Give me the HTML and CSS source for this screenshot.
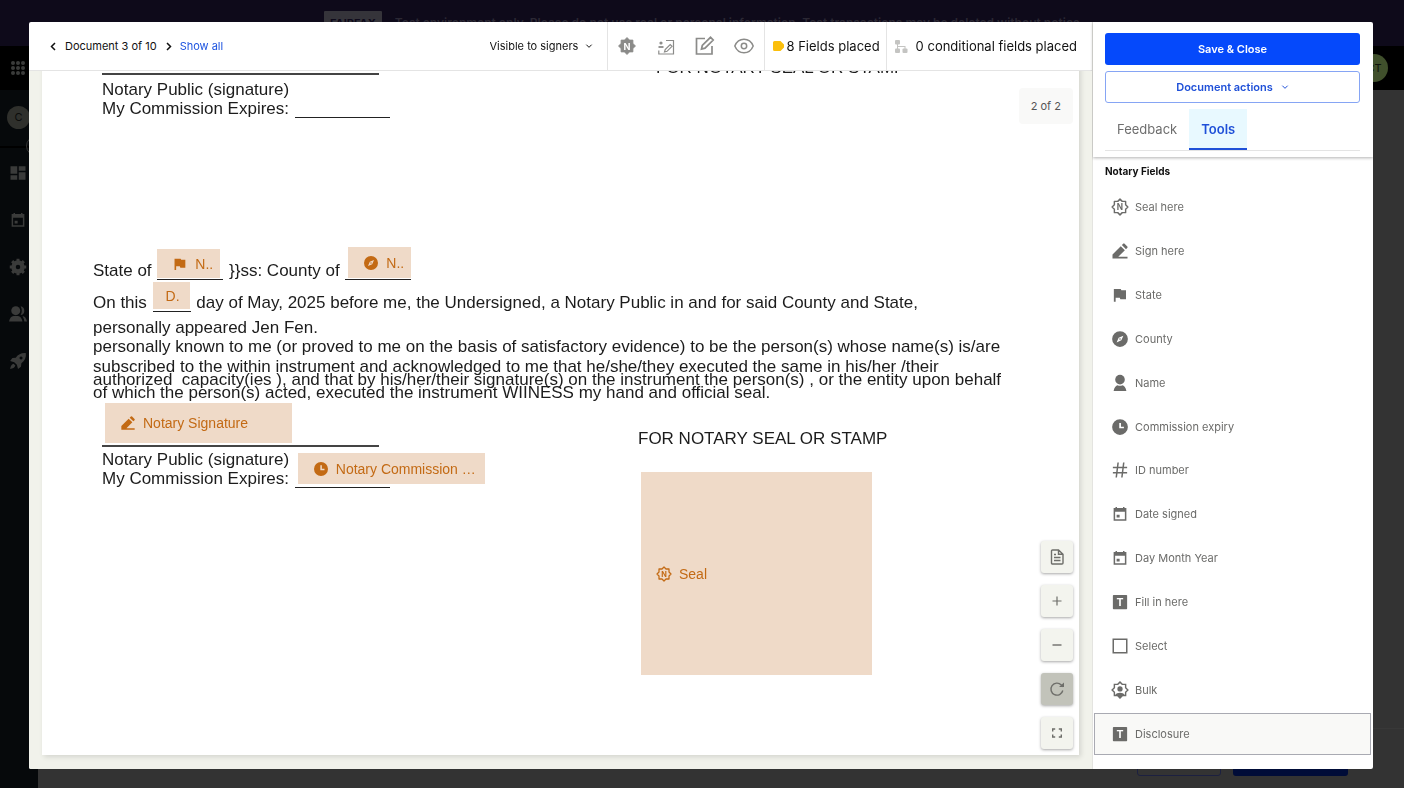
FILE: index.html
```html
<!DOCTYPE html>
<html lang="en">
<head>
<meta charset="utf-8">
<meta name="viewport" content="width=device-width, initial-scale=1">
<title>Document preparation</title>
<link rel="stylesheet" href="styles.css">
</head>
<body>
<svg class="sprite" aria-hidden="true">
  <symbol id="i-seal" viewBox="0 0 24 24"><path d="M12 1.500l3 3h4.500v4.500l3 3-3 3v4.500H15l-3 3-3-3H4.500V15l-3-3 3-3V4.500H9z" fill="none" stroke="currentColor" stroke-width="1.900" stroke-linejoin="round"/><text x="12" y="16" text-anchor="middle" class="glyph" fill="currentColor">N</text></symbol>
  <symbol id="i-seal-solid" viewBox="0 0 24 24"><path d="M12 1.800l3 3.100h4.100v4.100l3.100 3-3.100 3v4.100H15l-3 3.100-3-3.100H4.900V15l-3.100-3 3.100-3V4.900H9z" fill="currentColor" stroke="currentColor" stroke-linejoin="round"/><text x="12" y="16.300" text-anchor="middle" class="glyph" fill="#fff">N</text></symbol>
  <symbol id="i-pen" viewBox="0 0 24 24"><path d="M2 22v-5.500L13 5.500l5.500 5.500-8.800 8.800H22V22zM14.500 4l1.800-1.800a1.300 1.300 0 0 1 1.800 0l3.700 3.700a1.300 1.300 0 0 1 0 1.800L20 9.500z" fill="currentColor"/></symbol>
  <symbol id="i-flag" viewBox="0 0 24 24"><path d="M3.800 4H13l.8 1.500H20V17.500h-7.500l-.8-2H6.200V21H3.800z" fill="currentColor"/></symbol>
  <symbol id="i-compass" viewBox="0 0 24 24"><path fill-rule="evenodd" d="M12 1.500a10.500 10.500 0 1 1 0 21 10.500 10.500 0 0 1 0-21zM16.500 7.500l-6.300 2.700-2.700 6.300 6.300-2.700z" fill="currentColor"/><circle cx="12" cy="12" r="1" fill="currentColor"/></symbol>
  <symbol id="i-person" viewBox="0 0 24 24"><circle cx="12" cy="7.500" r="6.400" fill="currentColor"/><path d="M3.500 22.800c.5-4.800 3.200-7.300 5.300-7.800 2.100 1 4.300 1 6.400 0 2.100.5 4.800 3 5.300 7.800z" fill="currentColor"/></symbol>
  <symbol id="i-clock" viewBox="0 0 24 24"><path fill-rule="evenodd" d="M12 1.500a10.500 10.500 0 1 1 0 21 10.500 10.500 0 0 1 0-21zM11 6.500v7.300h6.200v-2.300h-3.900V6.500z" fill="currentColor"/></symbol>
  <symbol id="i-hash" viewBox="0 0 24 24"><path d="M9.500 2L7 22M17 2l-2.500 20M2.500 8.500h19M2.500 15.500h19" fill="none" stroke="currentColor" stroke-width="2"/></symbol>
  <symbol id="i-cal" viewBox="0 0 24 24"><path fill-rule="evenodd" d="M3.500 4H6V2.500h2V4h8V2.500h2V4h2.500v17h-17zM5.500 9v10h13V9zM7.500 13h4v3.500h-4z" fill="currentColor"/></symbol>
  <symbol id="i-text" viewBox="0 0 24 24"><rect x="2.500" y="2.500" width="19" height="19" rx="1" fill="currentColor"/><text x="12" y="17" text-anchor="middle" class="glyph glyph-lg" fill="#fff">T</text></symbol>
  <symbol id="i-box" viewBox="0 0 24 24"><rect x="3" y="3" width="18" height="18" fill="none" stroke="currentColor" stroke-width="2"/></symbol>
  <symbol id="i-bulk" viewBox="0 0 24 24"><path d="M12 1.500l3 3h4.500v4.500l3 3-3 3v4.500H15l-3 3-3-3H4.500V15l-3-3 3-3V4.500H9z" fill="none" stroke="currentColor" stroke-width="1.900"/><circle cx="12" cy="10.500" r="3.500" fill="currentColor"/><path d="M5.500 18.500c2.500-4 10.500-4 13 0l-3.500 1.300-3 3.200-3-3.200z" fill="currentColor"/></symbol>
  <symbol id="i-down" viewBox="0 0 24 24"><path d="M4 8l8 8 8-8" fill="none" stroke="currentColor" stroke-width="3"/></symbol>
</svg>

<div class="app" aria-hidden="true">
  <div class="banner"><span class="tag">FAIRFAX</span><span>Test environment only. Please do not use real or personal information. Test transactions may be deleted without notice</span></div>
  <div class="topbar">
    <svg width="16" height="16" viewBox="0 0 16 16" fill="currentColor"><circle cx="3" cy="3" r="2"/><circle cx="8" cy="3" r="2"/><circle cx="13" cy="3" r="2"/><circle cx="3" cy="8" r="2"/><circle cx="8" cy="8" r="2"/><circle cx="13" cy="8" r="2"/><circle cx="3" cy="13" r="2"/><circle cx="8" cy="13" r="2"/><circle cx="13" cy="13" r="2"/></svg>
    <span class="user">CT</span>
  </div>
  <div class="body">
    <nav class="rail">
      <div class="org"><span class="org-mark">C</span><span class="collapse"></span></div>
      <svg width="18" height="18" viewBox="0 0 24 24" fill="currentColor"><path d="M2 3h9v10H2zM13 3h9v6h-9zM13 11h9v10h-9zM2 15h9v6H2z"/></svg>
      <svg width="18" height="18"><use href="#i-cal"/></svg>
      <svg width="18" height="18" viewBox="0 0 24 24"><circle cx="12" cy="12" r="6" fill="none" stroke="currentColor" stroke-width="6"/><path d="M12 1v4M12 19v4M1 12h4M19 12h4M4.200 4.200l3 3M16.800 16.800l3 3M4.200 19.800l3-3M16.800 7.200l3-3" stroke="currentColor" stroke-width="4"/></svg>
      <svg width="18" height="18" viewBox="0 0 24 24" fill="currentColor"><circle cx="9" cy="7.500" r="6"/><path d="M0 22c1-5 3-7 6-7.500h6c3 .5 5 2.500 6 7.500zM15.500 1.600a6 6 0 0 1 0 11.800q3-5.500 0-11.800zM18 14.500c3 .5 5 2.500 6 7.500h-3.500q-.5-4-2.500-7.500z"/></svg>
      <svg width="18" height="18" viewBox="0 0 24 24"><path fill-rule="evenodd" d="M22.500 1.500c.5 6-1.500 10-6 13.500l-.5 4.500-4 3-1.500-5.500-3.500-3.500L1.500 12l3-4 4.500-.5C12.500 3 16.500 1 22.500 1.500zM16 6a2 2 0 1 0 .1 0zM6 15.500l2.500 2.500c-1 3-3.500 4-7 4.500.5-3.500 1.500-6 4.500-7z" fill="currentColor"/></svg>
    </nav>
    <div class="foot"><span class="ghost-btn"></span><span class="ghost-btn ghost-main"></span></div>
  </div>
</div>

<div class="modal" role="dialog" aria-label="Document editor">
  <main class="editor">
    <header class="toolbar">
      <div class="pager">
        <button class="plain" aria-label="Previous document"><svg width="9" height="9" viewBox="0 0 9 9"><path d="M6 1L2.500 4.500 6 8" fill="none" stroke="currentColor" stroke-width="1.500"/></svg></button>
        <span class="count">Document 3 of 10</span>
        <button class="plain" aria-label="Next document"><svg width="9" height="9" viewBox="0 0 9 9"><path d="M3 1l3.500 3.500L3 8" fill="none" stroke="currentColor" stroke-width="1.500"/></svg></button>
        <a class="show" href="#all">Show all</a>
      </div>
      <label class="visible"><select aria-label="Visibility"><option>Visible to signers</option></select><svg width="8" height="8"><use href="#i-down"/></svg></label>
      <div class="icons">
        <button class="plain" aria-label="Notary"><svg width="20" height="20"><use href="#i-seal-solid"/></svg></button>
        <button class="plain" aria-label="Signer fields"><svg width="20" height="20" viewBox="0 0 20 20" fill="none" stroke="currentColor" stroke-width="1.200"><path d="M10 4.500h7.500v13.500H2.800V14.500M8.500 16l.7-2.500L14.200 8.500l1.800 1.800-5 5z"/><circle cx="5" cy="7" r="1" fill="currentColor"/><path d="M2.500 11h5" stroke-width="1.800"/></svg></button>
        <button class="plain" aria-label="Edit"><svg width="20" height="20" viewBox="0 0 20 20" fill="none" stroke="currentColor" stroke-width="1.700"><path d="M10 2.500H1.500v15.500h15.500V10M6.500 13l.8-3.500L15.500 1.300l2.700 2.700L10 12.200z"/></svg></button>
        <button class="plain" aria-label="Preview"><svg width="20" height="20" viewBox="0 0 20 20" fill="none" stroke="currentColor" stroke-width="1.500"><path d="M.8 10C4.500 1 15.500 1 19.200 10 15.500 19 4.500 19 .8 10z"/><circle cx="10" cy="10" r="2.700"/></svg></button>
      </div>
      <div class="placed"><svg width="11" height="10" viewBox="0 0 11 10"><path d="M1.500 0H7.500L11 3.500v3L7.500 10h-6A1.500 1.500 0 0 1 0 8.500v-7A1.500 1.500 0 0 1 1.500 0z" fill="#fbbf0c"/></svg><span>8 Fields placed</span></div>
      <div class="placed conditional"><svg width="13" height="13" viewBox="0 0 13 13" fill="#c4c4c2"><rect width="5" height="4.500" rx="1"/><rect y="8.500" width="5" height="4.500" rx="1"/><rect x="7.500" y="8.500" width="5" height="4.500" rx="1"/><path d="M2 4h1v5H2zM2.500 6h8v3h-1V7h-7z"/></svg><span>0 conditional fields placed</span></div>
    </header>

    <section class="viewer">
      <article class="page">
        <div class="sign-row sign-row-prev">
          <div class="signer">
            <div class="rule"></div>
            <p>Notary Public (signature)</p>
            <p>My Commission Expires: <span class="blank w-expiry"></span></p>
          </div>
          <p>FOR NOTARY SEAL OR STAMP</p>
        </div>

        <div class="act">
          <p>State of <span class="blank w-place"><button class="field f-state"><svg><use href="#i-flag"/></svg>N..</button></span> }}ss: County of <span class="blank w-place"><button class="field f-county"><svg><use href="#i-compass"/></svg>N..</button></span></p>
          <p class="day">On this <span class="blank w-day"><button class="field f-day">D.</button></span> day of May, 2025 before me, the Undersigned, a Notary Public in and for said County and State,</p>
          <p>personally appeared Jen Fen.</p>
          <p>personally known to me (or proved to me on the basis of satisfactory evidence) to be the person(s) whose name(s) is/are</p>
          <p class="tight">subscribed to the within instrument and acknowledged to me that he/she/they executed the same in his/her /their<br>authorized&nbsp; capacity(ies ), and that by his/her/their signature(s) on the instrument the person(s) , or the entity upon behalf<br>of which the person(s) acted, executed the instrument WIINESS my hand and official seal.</p>
        </div>

        <div class="sign-row sign-row-cur">
          <div class="signer">
            <div class="rule"><button class="field f-sign"><svg><use href="#i-pen"/></svg>Notary Signature</button></div>
            <p>Notary Public (signature)</p>
            <p>My Commission Expires: <span class="blank w-expiry"><button class="field f-expiry"><svg><use href="#i-clock"/></svg>Notary Commission …</button></span></p>
          </div>
          <div class="stamp">
            <p>FOR NOTARY SEAL OR STAMP</p>
            <button class="field f-seal"><svg><use href="#i-seal"/></svg>Seal</button>
          </div>
        </div>
      </article>

      <span class="page-no">2 of 2</span>
      <div class="zoom">
        <button aria-label="Pages"><svg width="16" height="16" viewBox="0 0 16 16" fill="none" stroke="currentColor" stroke-width="1.400"><path d="M3.500 1h6L14 5.200V14a1 1 0 0 1-1 1H3.500a1 1 0 0 1-1-1V2a1 1 0 0 1 1-1zM9.500 1v4.200H14M5 8.500h6.500M5 11.500h6.500M5 5.500h2"/></svg></button>
        <button aria-label="Zoom in"><svg width="16" height="16" viewBox="0 0 16 16" stroke="currentColor" stroke-width="1.200"><path d="M8 3.500v9M3.500 8h9"/></svg></button>
        <button aria-label="Zoom out"><svg width="16" height="16" viewBox="0 0 16 16" stroke="currentColor" stroke-width="1.400"><path d="M3.500 8h9"/></svg></button>
        <button class="on" aria-label="Rotate"><svg width="16" height="16" viewBox="0 0 16 16" fill="none" stroke="currentColor" stroke-width="1.400"><path d="M13.800 9.500A6 6 0 1 1 12.300 4l1.700 1.800"/><path d="M10 6h5V1.500z" fill="currentColor" stroke="none"/></svg></button>
        <button aria-label="Full screen"><svg width="16" height="16" viewBox="0 0 16 16" fill="none" stroke="currentColor" stroke-width="1.400"><path d="M3.700 6.500V4h2.500M9.800 4h2.500v2.500M12.300 9.500V12H9.800M6.200 12H3.700V9.500"/></svg></button>
      </div>
    </section>
  </main>

  <aside class="panel">
    <div class="panel-head">
      <button class="btn btn-main">Save &amp; Close</button>
      <button class="btn btn-line">Document actions <svg width="8" height="8"><use href="#i-down"/></svg></button>
      <div class="tabs" role="tablist">
        <button role="tab" aria-selected="false">Feedback</button>
        <button role="tab" aria-selected="true" class="tab-on">Tools</button>
      </div>
    </div>
    <h2>Notary Fields</h2>
    <ul class="tools">
      <li><button><svg><use href="#i-seal"/></svg>Seal here</button></li>
      <li><button><svg><use href="#i-pen"/></svg>Sign here</button></li>
      <li><button><svg><use href="#i-flag"/></svg>State</button></li>
      <li><button><svg><use href="#i-compass"/></svg>County</button></li>
      <li><button><svg><use href="#i-person"/></svg>Name</button></li>
      <li><button><svg><use href="#i-clock"/></svg>Commission expiry</button></li>
      <li><button><svg><use href="#i-hash"/></svg>ID number</button></li>
      <li><button><svg><use href="#i-cal"/></svg>Date signed</button></li>
      <li><button><svg><use href="#i-cal"/></svg>Day Month Year</button></li>
      <li><button><svg><use href="#i-text"/></svg>Fill in here</button></li>
      <li><button><svg><use href="#i-box"/></svg>Select</button></li>
      <li><button><svg><use href="#i-bulk"/></svg>Bulk</button></li>
      <li><button class="current"><svg><use href="#i-text"/></svg>Disclosure</button></li>
    </ul>
  </aside>
</div>
</body>
</html>
```
FILE: styles.css
```css
* { box-sizing: border-box; }
body { margin: 0; font: 11px/16px Inter, sans-serif; color: #111; }
p, h2, ul { margin: 0; padding: 0; }
button, select { font: inherit; color: inherit; background: none; border: 0; padding: 0; margin: 0; cursor: pointer; }
svg { display: block; flex: none; }
.sprite { display: none; }
.glyph { font: 700 11px Inter, sans-serif; }
.glyph-lg { font-size: 14px; }

/* dimmed application behind the dialog */
.app { display: flex; flex-direction: column; height: 100vh; background: #333; color: #3a3b3a; overflow: hidden; }
.banner { flex: none; height: 46px; display: flex; justify-content: center; align-items: flex-start; gap: 13px; padding: 11px 0; background: #0e0a1a; color: #2b2834; font-size: 12px; line-height: 24px; font-weight: 600; }
.tag { background: #35343a; color: #0e0a1a; padding: 0 6px; font-size: 11px; font-weight: 700; border-radius: 1px; }
.topbar { flex: none; height: 44px; display: flex; align-items: center; justify-content: space-between; padding: 0 16px 0 10px; background: #000; }
.user { width: 28px; height: 28px; border-radius: 50%; background: #40502c; color: #0d120a; text-align: center; line-height: 28px; }
.body { flex: 1; display: flex; min-height: 0; }
.rail { flex: none; width: 38px; display: flex; flex-direction: column; gap: 29px; padding-left: 9px; background: #06090b; }
.org { height: 58px; margin: 0 0 -13px -9px; padding: 16px 0 0 7px; border-bottom: 2px solid #000; position: relative; }
.org-mark { display: block; width: 23px; height: 23px; border-radius: 50%; background: #2f302c; color: #0b0c0b; text-align: center; line-height: 23px; }
.collapse { position: absolute; right: -8px; bottom: -10px; width: 20px; height: 20px; border: 1px solid #333; border-radius: 50%; }
.foot { flex: 1; align-self: flex-end; height: 60px; display: flex; justify-content: flex-end; gap: 12px; padding: 12px 56px 12px 0; border-top: 1px solid #383838; }
.ghost-btn { width: 84px; border: 1px solid #1c2040; border-radius: 3px; }
.ghost-main { width: 115px; background: #000c38; border: 0; }

/* dialog */
.modal { position: fixed; inset: 22px 31px 19px 29px; display: flex; background: #fff; border-radius: 2px; overflow: hidden; }
.editor { flex: 1; min-width: 0; display: flex; flex-direction: column; }
.toolbar { flex: none; height: 49px; display: flex; align-items: stretch; border-bottom: 1px solid #e4e4e4; white-space: nowrap; }
.plain { display: flex; }
.pager { flex: 1; display: flex; align-items: center; padding-left: 20px; gap: 7px; }
.show { color: #1f55e0; text-decoration: none; }
.visible { display: flex; align-items: center; gap: 6px; padding-right: 14px; }
.visible select { appearance: none; }
.icons { display: flex; align-items: center; gap: 19px; padding: 0 10px 0 9px; border-left: 1px solid #e4e4e4; color: #8b8b89; }
.placed { display: flex; align-items: center; gap: 3px; padding: 0 6px 0 8px; border-left: 1px solid #e4e4e4; font-size: 13px; }
.conditional { gap: 8px; padding: 0 15px 0 8px; }

.viewer { flex: 1; min-height: 0; position: relative; overflow: hidden; display: flex; background: #f1f2eb; padding: 0 13px 14px; }
.page { flex: 1; min-width: 0; margin-top: -13px; background: #fff; color: #1c1c1c; font: 17px/19px "Liberation Sans", sans-serif; box-shadow: 2px 2px 5px rgba(0, 0, 0, .12); white-space: nowrap; }
.sign-row { display: grid; padding-left: 60px; }
.sign-row-prev { grid-template-columns: 554px 1fr; }
.sign-row-cur { grid-template-columns: 536px 1fr; }
.rule { position: relative; width: 277px; height: 17px; margin-bottom: 5px; border-bottom: 2px solid #444; }
.sign-row-cur .rule { height: 48px; margin-bottom: 3px; }
.blank { display: inline-block; position: relative; height: 19px; margin: 0 1px; vertical-align: bottom; border-bottom: 1px solid #222; }
.w-expiry { width: 95px; }
.w-place { width: 66px; }
.w-day { width: 38px; }
.act { padding: 143px 0 0 51px; }
.day { margin: 13px 0 6px; }
.tight { line-height: 13px; padding-top: 4px; }
.stamp { padding-top: 30px; }
.field { position: absolute; display: flex; align-items: center; gap: 7px; padding: 0 0 0 15px; background: #efdac8; color: #c36a14; font: 14px/16px "Liberation Sans", sans-serif; white-space: nowrap; overflow: hidden; }
.field svg { width: 16px; height: 16px; }
.f-state { left: 0; bottom: 1px; width: 63px; height: 29px; }
.f-county { left: 3px; bottom: 1px; width: 63px; height: 31px; }
.f-day { left: 0; bottom: 2px; width: 37px; height: 27px; padding-left: 13px; }
.f-sign { left: 3px; bottom: 2px; width: 187px; height: 40px; }
.f-expiry { left: 3px; bottom: 3px; width: 187px; height: 31px; }
.f-seal { position: static; width: 231px; height: 203px; margin: 24px 0 0 3px; }

.page-no { position: absolute; right: 19px; top: 17px; padding: 10px 12px; border-radius: 4px; background: #f9f9f8; color: #555; }
.zoom { position: absolute; right: 19px; bottom: 20px; display: flex; flex-direction: column; gap: 12px; }
.zoom button { width: 32px; height: 32px; display: grid; place-items: center; border-radius: 3px; background: #f3f4ee; color: #6e6e6a; box-shadow: 0 1px 3px rgba(0, 0, 0, .35); }
.zoom .on { background: #c2c3ba; }

.panel { flex: none; width: 281px; display: flex; flex-direction: column; border-left: 1px solid #e4e4e0; }
.panel-head { display: flex; flex-direction: column; padding: 11px 13px 6px 12px; box-shadow: 0 1px 3px rgba(0, 0, 0, .3); }
.btn { height: 32px; display: flex; align-items: center; justify-content: center; gap: 8px; border-radius: 3px; font-weight: 600; margin-bottom: 6px; }
.btn-main { background: #0549fb; color: #fff; }
.btn-line { border: 1px solid #86a5f4; color: #1f50d8; }
.tabs { display: flex; border-bottom: 1px solid #e4e4e4; }
.tabs button { height: 41px; padding: 0 12px; font-size: 13px; color: #6e6e6e; border-bottom: 2px solid transparent; }
.tabs .tab-on { background: #e8f9ff; color: #1f50d8; font-weight: 600; border-color: #1f50d8; }
h2 { font-size: 10px; line-height: 16px; font-weight: 700; padding: 6px 0 6px 12px; }
.tools { flex: 1; list-style: none; display: grid; grid-auto-rows: 1fr; padding: 0 2px 13px 1px; }
.tools li { display: flex; padding: 1px 0; }
.tools button { flex: 1; display: flex; align-items: center; gap: 6px; padding-left: 16px; color: #6b6b69; border: 1px solid transparent; }
.tools svg { width: 18px; height: 18px; }
.tools .current { background: #f9f9f7; border-color: #a9aab2; }
```
